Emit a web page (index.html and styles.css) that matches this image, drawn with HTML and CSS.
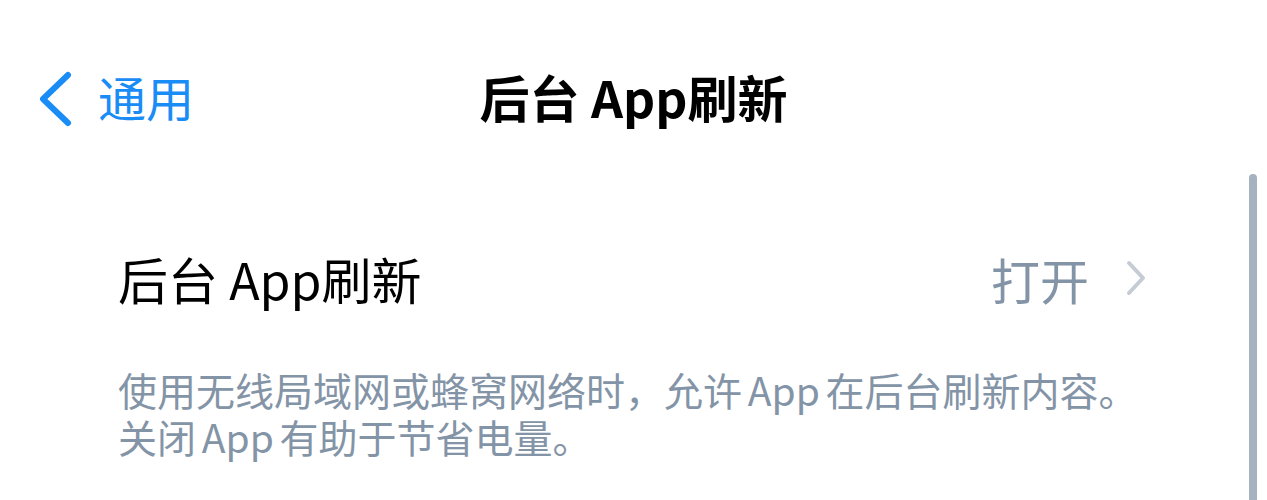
FILE: index.html
```html
<!DOCTYPE html>
<html lang="zh-CN">
<head>
    <meta charset="UTF-8">
    <meta name="viewport" content="width=device-width, initial-scale=1.0">
    <title>后台 App刷新</title>
    <link rel="stylesheet" href="styles.css">
</head>
<body>
    <div class="screen">
        <header class="nav">
            <a class="back" href="#">
                <svg class="back-icon" viewBox="0 0 36 56" width="36" height="56">
                    <path d="M31 4 L6 28 L31 52" fill="none" stroke="currentColor" stroke-width="6" stroke-linecap="round" stroke-linejoin="round"/>
                </svg>
                <span class="back-label">通用</span>
            </a>
            <h1 class="nav-title">后台 App刷新</h1>
        </header>

        <div class="group">
            <div class="row">
                <span class="row-label">后台 App刷新</span>
                <span class="row-value">打开</span>
                <svg class="row-chevron" viewBox="0 0 22 38" width="22" height="38">
                    <path d="M4 4 L18 19 L4 34" fill="none" stroke="currentColor" stroke-width="4" stroke-linecap="round" stroke-linejoin="round"/>
                </svg>
            </div>
            <div class="footnote">
                <p class="footnote-line">使用无线局域网或蜂窝网络时，允许 App 在后台刷新内容。</p>
                <p class="footnote-line">关闭 App 有助于节省电量。</p>
            </div>
        </div>

        <div class="scrollbar"></div>
    </div>
</body>
</html>
```

FILE: styles.css
```css
:root {
    --blue: #1a8cf5;
    --text: #000000;
    --muted: #8494a7;
    --chevron: #c5ccd4;
    --thumb: #a6b2c0;
}

* {
    box-sizing: border-box;
}

body {
    margin: 0;
    background: #ffffff;
    font-family: "Noto Sans CJK SC", "Noto Sans", sans-serif;
    color: var(--text);
}

.screen {
    position: relative;
    width: 1267px;
    height: 500px;
    overflow: hidden;
}

.nav {
    position: relative;
    height: 200px;
    display: flex;
    align-items: flex-start;
    justify-content: center;
    padding-top: 64px;
}

.back {
    position: absolute;
    left: 37px;
    top: 71px;
    display: flex;
    align-items: flex-start;
    gap: 25px;
    color: var(--blue);
    text-decoration: none;
    font-size: 48px;
}

.back-icon {
    display: block;
}

.back-label {
    line-height: 50px;
}

.nav-title {
    margin: 0;
    font-size: 50px;
    font-weight: 700;
    line-height: 64px;
}

.group {
    padding: 43px 120px 0 118px;
}

.row {
    display: flex;
    align-items: center;
    height: 70px;
}

.row-label {
    flex: 1;
    font-size: 50px;
    line-height: 70px;
}

.row-value {
    font-size: 49px;
    color: var(--muted);
    margin-right: 36px;
}

.row-chevron {
    color: var(--chevron);
}

.footnote {
    margin-top: 53px;
    color: var(--muted);
}

.footnote-line {
    margin: 0;
    font-size: 39px;
    line-height: 47px;
    height: 47px;
    word-spacing: -3px;
    white-space: nowrap;
}

.scrollbar {
    position: absolute;
    right: 10px;
    top: 174px;
    width: 8px;
    height: 340px;
    border-radius: 4px;
    background: var(--thumb);
}
```
